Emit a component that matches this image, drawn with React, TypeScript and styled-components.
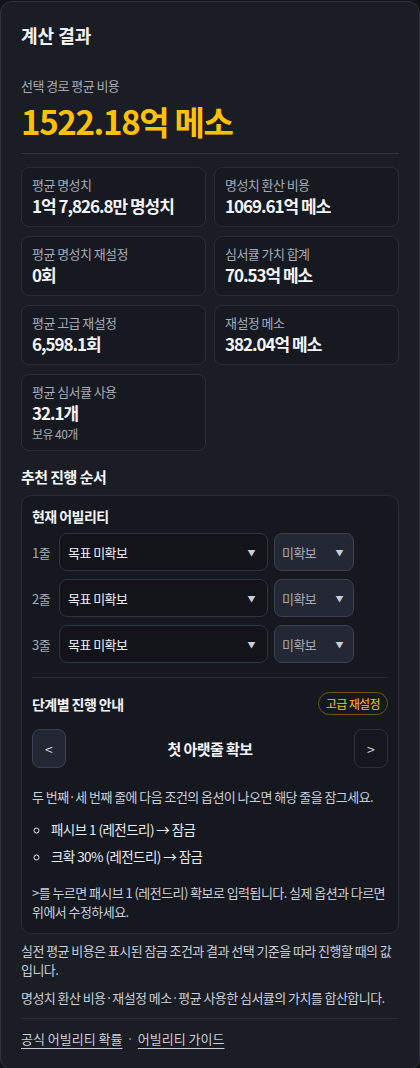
import React from "react"
import styled, { createGlobalStyle } from "styled-components"

const GlobalStyle = createGlobalStyle`
  html, body {
    margin: 0;
    padding: 0;
    background: #121419;
  }
  body {
    font-family: "Noto Sans CJK KR", "Noto Sans", sans-serif;
    color: #e8eaef;
    letter-spacing: -0.035em;
  }
  * {
    box-sizing: border-box;
  }
`

interface Stat {
  readonly label: string
  readonly value: string
  readonly sub?: string
}

const stats: readonly Stat[] = [
  { label: "평균 명성치", value: "1억 7,826.8만 명성치" },
  { label: "명성치 환산 비용", value: "1069.61억 메소" },
  { label: "평균 명성치 재설정", value: "0회" },
  { label: "심서큘 가치 합계", value: "70.53억 메소" },
  { label: "평균 고급 재설정", value: "6,598.1회" },
  { label: "재설정 메소", value: "382.04억 메소" },
  { label: "평균 심서큘 사용", value: "32.1개", sub: "보유 40개" },
]

const lines = ["1줄", "2줄", "3줄"]

export default function App() {
  return (
    <>
      <GlobalStyle />
      <Card>
        <Title>계산 결과</Title>
        <CostLabel>선택 경로 평균 비용</CostLabel>
        <BigCost>1522.18억 메소</BigCost>
        <Divider />

        <StatGrid>
          {stats.map(s => (
            <StatCard key={s.label}>
              <StatLabel>{s.label}</StatLabel>
              <StatValue>{s.value}</StatValue>
              {s.sub && <StatSub>{s.sub}</StatSub>}
            </StatCard>
          ))}
        </StatGrid>

        <SectionTitle>추천 진행 순서</SectionTitle>
        <Panel>
          <PanelTitle>현재 어빌리티</PanelTitle>
          <LineList>
            {lines.map(l => (
              <LineRow key={l}>
                <LineLabel>{l}</LineLabel>
                <Select>
                  <span>목표 미확보</span>
                  <Arrow>▼</Arrow>
                </Select>
                <SmallSelect>
                  <span>미확보</span>
                  <Arrow>▼</Arrow>
                </SmallSelect>
              </LineRow>
            ))}
          </LineList>
          <PanelDivider />

          <GuideHeader>
            <PanelTitle>단계별 진행 안내</PanelTitle>
            <Badge>고급 재설정</Badge>
          </GuideHeader>
          <StepNav>
            <NavButton $active>&lt;</NavButton>
            <StepTitle>첫 아랫줄 확보</StepTitle>
            <NavButton>&gt;</NavButton>
          </StepNav>
          <GuideText>두 번째·세 번째 줄에 다음 조건의 옵션이 나오면 해당 줄을 잠그세요.</GuideText>
          <Bullets>
            <li>패시브 1 (레전드리) → 잠금</li>
            <li>크확 30% (레전드리) → 잠금</li>
          </Bullets>
          <NoteText>&gt;를 누르면 패시브 1 (레전드리) 확보로 입력됩니다. 실제 옵션과 다르면 위에서 수정하세요.</NoteText>
        </Panel>

        <FootText>실전 평균 비용은 표시된 잠금 조건과 결과 선택 기준을 따라 진행할 때의 값입니다.</FootText>
        <FootText $gap>명성치 환산 비용·재설정 메소·평균 사용한 심서큘의 가치를 합산합니다.</FootText>
        <FootDivider />
        <Links>
          <LinkText href="#">공식 어빌리티 확률</LinkText>
          <Dot>·</Dot>
          <LinkText href="#">어빌리티 가이드</LinkText>
        </Links>
      </Card>
    </>
  )
}

const Card = styled.div`
  width: 420px;
  margin-top: 1px;
  background: #1b1d25;
  border: 1px solid #30333d;
  border-radius: 12px;
  padding: 20px 20px 20px;
`

const Title = styled.h2`
  margin: 0;
  font-size: 18px;
  line-height: 26px;
  font-weight: 700;
  letter-spacing: 0;
  color: #f3f4f7;
`

const CostLabel = styled.div`
  margin-top: 29px;
  font-size: 13px;
  line-height: 18px;
  color: #a4aab6;
`

const BigCost = styled.div`
  margin-top: 6px;
  font-size: 33px;
  line-height: 40px;
  font-weight: 700;
  letter-spacing: -0.04em;
  color: #ffc107;
`

const Divider = styled.div`
  height: 1px;
  margin-top: 12px;
  background: #30333d;
`

const StatGrid = styled.div`
  display: grid;
  grid-template-columns: 1fr 1fr;
  gap: 9px 8px;
  margin-top: 13px;
  align-items: start;
`

const StatCard = styled.div`
  background: #171921;
  border: 1px solid #2a2d37;
  border-radius: 8px;
  padding: 8px 10px;
  min-height: 60px;
`

const StatLabel = styled.div`
  font-size: 13px;
  line-height: 18px;
  color: #a4aab6;
`

const StatValue = styled.div`
  font-size: 17px;
  line-height: 24px;
  font-weight: 700;
  letter-spacing: -0.06em;
  color: #f3f4f7;
`

const StatSub = styled.div`
  font-size: 12px;
  line-height: 17px;
  color: #a4aab6;
`

const SectionTitle = styled.h3`
  margin: 15px 0 0;
  font-size: 15px;
  line-height: 22px;
  font-weight: 700;
  color: #f3f4f7;
`

const Panel = styled.div`
  margin-top: 7px;
  background: #161820;
  border: 1px solid #2a2d37;
  border-radius: 10px;
  padding: 10px 10px 12px;
`

const PanelTitle = styled.div`
  font-size: 14px;
  line-height: 20px;
  font-weight: 700;
  color: #f3f4f7;
`

const LineList = styled.div`
  display: flex;
  flex-direction: column;
  gap: 8px;
  margin-top: 7px;
`

const LineRow = styled.div`
  display: flex;
  align-items: center;
  gap: 6px;
`

const LineLabel = styled.span`
  width: 21px;
  font-size: 13px;
  color: #a4aab6;
`

const Select = styled.div`
  width: 209px;
  height: 38px;
  display: flex;
  align-items: center;
  justify-content: space-between;
  padding: 0 12px 0 8px;
  background: #12141a;
  border: 1px solid #30343f;
  border-radius: 8px;
  font-size: 13px;
  color: #eef0f4;
`

const SmallSelect = styled(Select)`
  width: 80px;
  padding: 0 10px 0 7px;
  background: #232834;
  border-color: #3a404d;
  color: #a4aab6;
`

const Arrow = styled.span`
  font-size: 8px;
  color: #c9ced8;
`

const PanelDivider = styled.div`
  height: 1px;
  margin: 14px 0;
  background: #2a2d37;
`

const GuideHeader = styled.div`
  display: flex;
  align-items: center;
  justify-content: space-between;
`

const Badge = styled.span`
  height: 23px;
  padding: 0 7px;
  display: inline-flex;
  align-items: center;
  border: 1px solid #6b5516;
  border-radius: 12px;
  font-size: 12px;
  letter-spacing: -0.05em;
  color: #ffc107;
`

const StepNav = styled.div`
  display: flex;
  align-items: center;
  justify-content: space-between;
  margin-top: 14px;
`

const NavButton = styled.button<{ $active?: boolean }>`
  width: 34px;
  height: 39px;
  padding: 0;
  border-radius: 8px;
  border: 1px solid ${p => (p.$active ? "#3a4152" : "#2c3039")};
  background: ${p => (p.$active ? "#222733" : "#15171e")};
  color: #d8dce4;
  font-family: "Noto Sans CJK KR", sans-serif;
  font-size: 14px;
`

const StepTitle = styled.div`
  font-size: 15px;
  font-weight: 700;
  color: #f3f4f7;
`

const GuideText = styled.p`
  margin: 19px 0 0;
  font-size: 13px;
  line-height: 20px;
  color: #c9ced8;
`

const Bullets = styled.ul`
  margin: 12px 0 0;
  padding: 0 0 0 19px;
  list-style: circle;
  font-size: 13.5px;
  line-height: 20px;
  color: #e8eaef;
  li + li {
    margin-top: 7px;
  }
`

const NoteText = styled.p`
  margin: 17px 0 0;
  font-size: 13px;
  line-height: 19px;
  color: #c9ced8;
`

const FootText = styled.p<{ $gap?: boolean }>`
  margin: ${p => (p.$gap ? "9px" : "7px")} 0 0;
  font-size: 13px;
  line-height: 19px;
  color: #c9ced8;
`

const FootDivider = styled.div`
  height: 1px;
  margin-top: 11px;
  background: #2a2d37;
`

const Links = styled.div`
  display: flex;
  align-items: center;
  gap: 4px;
  margin-top: 10px;
  font-size: 13px;
  line-height: 20px;
  letter-spacing: 0;
`

const LinkText = styled.a`
  color: #c9ced8;
  text-decoration: underline;
  text-underline-offset: 4px;
`

const Dot = styled.span`
  color: #a4aab6;
`
